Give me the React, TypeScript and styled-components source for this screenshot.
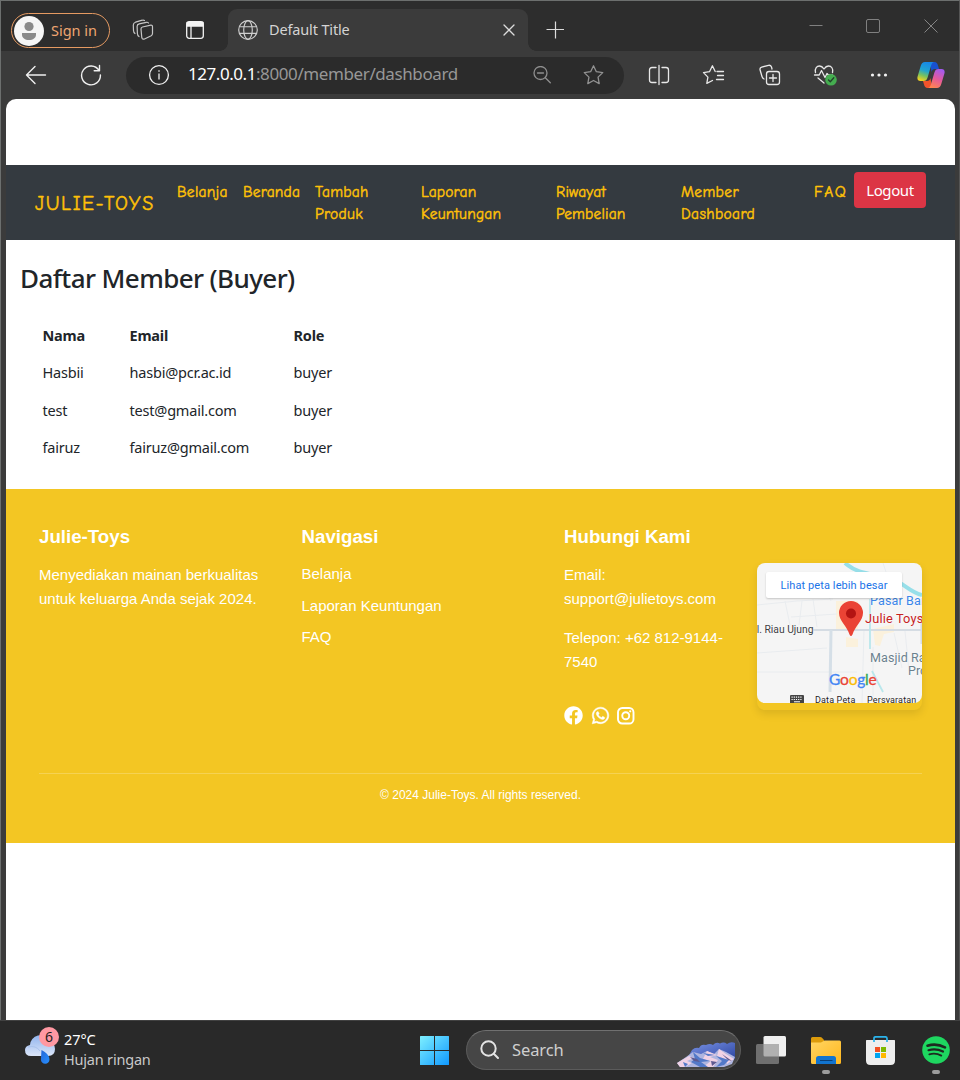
import React from 'react';
import styled, { createGlobalStyle } from 'styled-components';
import { FaFacebook, FaWhatsapp } from 'react-icons/fa';

const ui = `"Noto Sans", "Open Sans", sans-serif`;
const comic = `"Comic Neue", "Comic Sans MS", Lato, sans-serif`;
const arial = `"Liberation Sans", Arial, sans-serif`;

const Global = createGlobalStyle`
  * { box-sizing: border-box; }
  body { margin: 0; background: #3b3b3b; font-family: ${ui}; }
  h1, h2, p { margin: 0; }
  svg { display: block; flex: none; }
`;

const Screen = styled.div`
  width: 960px;
  height: 1080px;
  display: flex;
  flex-direction: column;
  overflow: hidden;
  background: #3b3b3b;
`;

const Browser = styled.div`
  height: 1020px;
  display: flex;
  flex-direction: column;
  border: 1px solid #6c6f6e;
  border-bottom: 0;
  border-right-color: #555;
`;

const Label = styled.span<{ $size: number; $ls?: number; $color?: string; $w?: number }>`
  font-size: ${(p) => p.$size}px;
  letter-spacing: ${(p) => p.$ls ?? 0}px;
  color: ${(p) => p.$color ?? '#d4d4d4'};
  font-weight: ${(p) => p.$w ?? 400};
  line-height: 20px;
  padding-bottom: 2px;
  white-space: nowrap;
`;

const TabBar = styled.div`
  height: 50px;
  flex: none;
  display: flex;
  align-items: flex-start;
  background: #2d2d2d;
`;

const SignIn = styled.div`
  width: 99px;
  height: 35px;
  margin: 12px 0 0 10px;
  display: flex;
  align-items: center;
  gap: 7px;
  padding-left: 2px;
  border: 1.5px solid #e59a62;
  border-radius: 18px;
`;

const BarIcon = styled.div<{ $left: number; $top: number }>`
  margin: ${(p) => p.$top}px 0 0 ${(p) => p.$left}px;
`;

const Tab = styled.div`
  position: relative;
  width: 300px;
  height: 42px;
  margin: 8px 0 0 24px;
  padding: 0 13px 0 10px;
  display: flex;
  align-items: center;
  background: #3b3b3b;
  border-radius: 9px 9px 0 0;
  &::before, &::after {
    content: '';
    position: absolute;
    bottom: 0;
    width: 8px;
    height: 8px;
  }
  &::before { left: -8px; background: radial-gradient(circle at 0 0, #2d2d2d 7.5px, #3b3b3b 8px); }
  &::after { right: -8px; background: radial-gradient(circle at 100% 0, #2d2d2d 7.5px, #3b3b3b 8px); }
`;

const TabTitle = styled.div`
  flex: 1;
  padding-left: 11px;
  display: flex;
`;

const Toolbar = styled.div`
  height: 48px;
  flex: none;
  display: flex;
  align-items: center;
  padding-left: 23px;
  background: #3b3b3b;
`;

const Address = styled.div`
  width: 498px;
  height: 37px;
  margin: 0 23px 0 24px;
  padding: 0 19px 0 22px;
  display: flex;
  align-items: center;
  background: #2b2b2b;
  border-radius: 19px;
`;

const Url = styled.div`
  flex: 1;
  padding-left: 18px;
  display: flex;
`;

const ToolIcons = styled.div`
  display: flex;
  align-items: center;
  gap: 31.3px;
`;

const Page = styled.main`
  flex: 1;
  margin: 0 4px 0 5px;
  padding-top: 66px;
  background: #fff;
  border-radius: 10px 10px 0 0;
`;

const Nav = styled.nav`
  height: 75px;
  display: flex;
  align-items: flex-start;
  background: #343a40;
  font-family: ${comic};
  color: #ffc107;
  -webkit-text-stroke: 0.45px #ffc107;
`;

const Brand = styled.div`
  width: 171px;
  padding: 2px 0 0 29px;
  align-self: center;
  font-size: 20px;
  line-height: 24px;
  letter-spacing: 1.6px;
`;

const NavLink = styled.a<{ $w: number; $ls: number }>`
  width: ${(p) => p.$w}px;
  padding-top: 16px;
  font-size: 15.5px;
  line-height: 22px;
  white-space: pre-line;
  letter-spacing: ${(p) => p.$ls}px;
`;

const Logout = styled.button`
  width: 72px;
  height: 36px;
  margin-top: 7px;
  padding: 0;
  border: 0;
  border-radius: 4px;
  background: #dc3545;
  color: #fff;
  font-family: ${ui};
  font-size: 15px;
  letter-spacing: -0.4px;
  -webkit-text-stroke: 0;
`;

const Members = styled.section`
  height: 249px;
  padding: 21px 0 0 14px;
  color: #212529;
`;

const Heading = styled.h1`
  font-size: 26px;
  line-height: 34px;
  font-weight: 500;
  letter-spacing: -0.6px;
`;

const Table = styled.table`
  margin: 21px 0 0 22.5px;
  border-collapse: collapse;
  table-layout: fixed;
  width: 320px;
  font-size: 14.5px;
  letter-spacing: -0.2px;
  th, td {
    height: 37.5px;
    padding: 0;
    text-align: left;
    line-height: 20px;
  }
`;

const Col = styled.col<{ $w: number }>`
  width: ${(p) => p.$w}px;
`;

const Footer = styled.footer`
  height: 354px;
  padding: 34px 33px 0;
  background: #f3c623;
  color: #fff;
  font-family: ${arial};
`;

const FooterCols = styled.div`
  height: 250px;
  display: grid;
  grid-template-columns: 262.5px 262.5px 193px 165px;
`;

const FooterTitle = styled.h2`
  padding-top: 1px;
  font-size: 18.7px;
  line-height: 25px;
  font-weight: 700;
`;

const FooterText = styled.p<{ $top: number }>`
  margin-top: ${(p) => p.$top}px;
  font-size: 15px;
  line-height: 24px;
  white-space: pre-line;
`;

const FooterLinks = styled.div`
  margin-top: 9px;
  display: flex;
  flex-direction: column;
  font-size: 15px;
  line-height: 31.5px;
`;

const FooterLink = styled.a`
  display: block;
`;

const Social = styled.div`
  display: flex;
  align-items: center;
  gap: 7.5px;
  margin-top: 32px;
`;

const MapCard = styled.div`
  width: 165px;
  height: 147px;
  margin-top: 40px;
  border-radius: 8px;
  box-shadow: 0 4px 8px rgba(0, 0, 0, 0.1);
`;

const MapView = styled.div`
  position: relative;
  height: 140px;
  overflow: hidden;
  border-radius: 8px;
  background: #f5f5f5;
  font-family: Roboto, sans-serif;
`;

const MapText = styled.span<{ $x: number; $y: number; $size: number; $c: string; $ls?: number }>`
  position: absolute;
  left: ${(p) => p.$x}px;
  top: ${(p) => p.$y}px;
  font-size: ${(p) => p.$size}px;
  line-height: 14px;
  color: ${(p) => p.$c};
  letter-spacing: ${(p) => p.$ls ?? 0}px;
  white-space: nowrap;
  text-shadow: 0 0 1px #fff, 0 0 2px #fff;
`;

const MapButton = styled.div`
  position: absolute;
  left: 9px;
  top: 9px;
  width: 136px;
  height: 26px;
  display: flex;
  align-items: center;
  justify-content: center;
  background: #fff;
  border-radius: 2px;
  box-shadow: 0 1px 2px rgba(0, 0, 0, 0.2);
  color: #1a73e8;
  font-size: 11px;
  letter-spacing: 0.1px;
`;

const MapPin = styled.svg`
  position: absolute;
  left: 82px;
  top: 38px;
`;

const MapKeyboard = styled.svg`
  position: absolute;
  left: 33px;
  top: 132px;
`;

const GoogleMark = styled.div`
  position: absolute;
  left: 72px;
  top: 107px;
  display: flex;
  font-family: Lato, sans-serif;
  font-size: 15.5px;
  line-height: 19px;
  letter-spacing: -0.25px;
  -webkit-text-stroke: 0.3px;
`;

const Tint = styled.span<{ $c: string }>`
  color: ${(p) => p.$c};
`;

const Copyright = styled.div`
  border-top: 1px solid rgba(255, 255, 255, 0.22);
  padding-top: 13px;
  text-align: center;
  font-size: 12px;
  line-height: 16px;
`;

const Taskbar = styled.div`
  height: 60px;
  display: flex;
  align-items: flex-start;
  background: #292929;
  border-top: 1px solid #414141;
`;

const Weather = styled.div`
  width: 420px;
  padding: 6px 0 0 24px;
  display: flex;
  gap: 5px;
`;

const WeatherText = styled.div`
  padding-top: 2px;
  display: flex;
  flex-direction: column;
  ${Label} {
    padding-bottom: 0;
  }
`;

const WeatherIcon = styled.div`
  position: relative;
`;

const Badge = styled.div`
  position: absolute;
  left: 15px;
  top: 0;
  width: 20px;
  height: 20px;
  border-radius: 50%;
  background: #ff98a2;
  color: #1c1c1c;
  font-size: 14px;
  line-height: 20px;
  text-align: center;
`;

const Search = styled.div`
  width: 275px;
  height: 40px;
  margin: 9px 16px 0 16px;
  padding: 0 4px 0 13px;
  display: flex;
  align-items: center;
  gap: 12px;
  overflow: hidden;
  background: #464646;
  border: 1px solid #5b5b5b;
  border-top-color: #707070;
  border-radius: 20px;
`;

const SearchLabel = styled.div`
  flex: 1;
  display: flex;
  padding-top: 2px;
`;

const TaskApp = styled.div<{ $w: number; $left: number }>`
  width: ${(p) => p.$w}px;
  margin: 15px 0 0 ${(p) => p.$left}px;
  display: flex;
  flex-direction: column;
  align-items: center;
  gap: 6px;
`;

const Running = styled.div`
  width: 8px;
  height: 4px;
  border-radius: 2px;
  background: #9c9c9c;
`;

const line = { fill: 'none', strokeLinecap: 'round', strokeLinejoin: 'round' } as const;

const navLinks = [
  { text: 'Belanja', w: 66, ls: 0.25 },
  { text: 'Beranda', w: 72, ls: 0.15 },
  { text: 'Tambah\nProduk', w: 106, ls: 0.25 },
  { text: 'Laporan\nKeuntungan', w: 135, ls: 0.15 },
  { text: 'Riwayat\nPembelian', w: 125, ls: 0.15 },
  { text: 'Member\nDashboard', w: 133, ls: 0.35 },
  { text: 'FAQ', w: 40, ls: 1.5 },
];

const members = [
  ['Hasbii', 'hasbi@pcr.ac.id', 'buyer'],
  ['test', 'test@gmail.com', 'buyer'],
  ['fairuz', 'fairuz@gmail.com', 'buyer'],
];

const Avatar = () => (
  <svg width="30" height="30" viewBox="0 0 30 30">
    <circle cx="15" cy="15" r="15" fill="#f6f6f6" />
    <circle cx="15" cy="10.5" r="4.6" fill="#8a8a8a" />
    <path d="M8 17h14v1.500c0 3.600-3 5.500-7 5.500s-7-1.900-7-5.500z" fill="#8a8a8a" />
  </svg>
);

const Workspaces = () => (
  <svg width="22" height="22" viewBox="0 0 22 22" {...line} stroke="#c6c6c6" strokeWidth="1.2">
    <path d="M10.500 8 18.800 6.200Q20.500 6 20.500 7.700V14.500Q20.500 16 19.200 16.700L12.500 20Q10.300 20.800 9.800 18.700L9 10Q8.900 8.400 10.500 8Z" />
    <path d="M16.500 4Q15.800 3 14.300 3.300L7.200 4.900Q5.100 5.400 5.100 7.400L5.400 14.500Q5.500 16.500 7 17.600" />
    <path d="M12.500 1.500Q11.500.8 10.300 1.200L3.500 3.200Q1.400 3.900 1.300 6L1.500 11.500Q1.600 13.500 3 14.500" />
  </svg>
);

const Globe = () => (
  <svg width="20" height="20" viewBox="0 0 20 20" {...line} stroke="#cfcfcf" strokeWidth="1.15">
    <circle cx="10" cy="10" r="9.300" />
    <ellipse cx="10" cy="10" rx="4.300" ry="9.300" />
    <path d="M1.600 6.700h16.800M1.600 13.300h16.800" />
  </svg>
);

const Copilot = () => (
  <svg width="28" height="26" viewBox="0 0 28 26">
    <defs>
      <linearGradient id="cpA" x1="0.600" y1="0" x2="0.300" y2="1">
        <stop offset="0" stopColor="#1687e8" /><stop offset="0.450" stopColor="#20a4d0" />
        <stop offset="0.720" stopColor="#77c160" /><stop offset="1" stopColor="#f5d21f" />
      </linearGradient>
      <linearGradient id="cpB" x1="0.700" y1="0" x2="0.300" y2="1">
        <stop offset="0" stopColor="#a35af0" /><stop offset="0.500" stopColor="#e45a9b" />
        <stop offset="1" stopColor="#ff8550" />
      </linearGradient>
    </defs>
    <path d="M13 0h4.500c2 0 2.900 1.500 3.500 3.500L22 7h-4c-2 0-3 1-3.500 3z" fill="#1851d0" />
    <path d="M15 26h-4.500c-2 0-2.900-1.500-3.500-3.500L6 19h4c2 0 3-1 3.500-3z" fill="#f0532b" />
    <path d="M8 0h9c-1.800.5-2.500 2-3.100 4.200L10.600 15.500C9.900 18 8.800 19 6.500 19H3.500C.8 19-.1 17 .6 14.500L3.700 4C4.500 1.500 5.800 0 8 0z" fill="url(#cpA)" />
    <path d="M20 26h-9c1.800-.5 2.500-2 3.100-4.200l3.300-11.300C18.100 8 19.200 7 21.500 7h3c2.700 0 3.600 2 2.900 4.500L24.300 22c-.8 2.500-2.100 4-4.300 4z" fill="url(#cpB)" />
  </svg>
);

const Instagram = () => (
  <svg width="18" height="18" viewBox="0 0 18 18" fill="none" stroke="#fff" strokeWidth="1.900">
    <rect x="1" y="1" width="15.500" height="15.500" rx="4.300" />
    <circle cx="8.750" cy="8.750" r="3.500" />
    <circle cx="13.200" cy="4.300" r="1.100" fill="#fff" stroke="none" />
  </svg>
);

const MapLines = () => (
  <svg width="165" height="140" viewBox="0 0 165 140" fill="none">
    <path d="M79 38h22v28H79zM116 66l21 -5 0 8-10 2-4 12-5-1zM89 74l12 2v8h-12z" fill="#fbf1dc" />
    <path d="M0 42 40 38 76 36M28 38l5 24M45 38l-3 24M56 36l4 28M34 54l46-3M60 10l14 28M0 109h100M0 90l70-5M107 66l-2 74M116 84v50M137 70l8 35M148 68l4 40M126 0l8 24" stroke="#e9ecef" strokeWidth="1" />
    <path d="M56 67H165" stroke="#d5dce3" strokeWidth="2" />
    <path d="M74 67l-1 62" stroke="#d5dfe7" strokeWidth="3" />
    <path d="M165 53v28" stroke="#d5dce3" strokeWidth="3" />
    <path d="M88 0c16 14 32 9 50 17 10 5 17 13 27 15" stroke="#97dfe9" strokeWidth="4" />
    <path d="M115 108l11 21M113 36v50" stroke="#b9e7ec" strokeWidth="1.800" />
  </svg>
);

const Mountains = () => (
  <svg width="60" height="26" viewBox="0 0 60 26">
    <defs>
      <linearGradient id="mtn" x1="0" y1="0" x2="1" y2="1">
        <stop offset="0" stopColor="#7c95e8" /><stop offset="1" stopColor="#27409c" />
      </linearGradient>
    </defs>
    <path d="M12 15 16 8Q19 5 23 6 25 1.500 30 3 34 1 37 3 40-.5 44 1.500 48-.5 51 2 55-1 59 1V17L50 20 20 20z" fill="url(#mtn)" />
    <path d="M1 21 10 15 17 10 25 12 31 9 38 12 43 7 50 10 59 15 56 22 48 25 4 25z" fill="#aeb5df" />
    <path d="M1 21 13 14 18 16 11 19 16 21 9 25 4 25zM31 9l10 4-7 2 8 3-5 7H27l8-6-8-2zM43 7l7 5 8 5-7 5-2-5-8-3z" fill="#f0d2e5" />
    <path d="M17 10l7 6 10 3-9 1 7 5-8 0-9-5 4-3zM40 14l6 5-6 6 8-2 5-5zM27 11l5 3 7-1zM7 20l5 2-3 3z" fill="#5379c9" />
    <path d="M14 15l7 2 3 3-6-1zM46 12l10 7-4-1zM35 19l6 1-5 4z" fill="#5d5a91" />
  </svg>
);

export default function App() {
  return (
    <Screen>
      <Global />
      <Browser>
        <TabBar>
          <SignIn>
            <Avatar />
            <Label $size={14.5} $color="#efa571">Sign in</Label>
          </SignIn>
          <BarIcon $left={22} $top={18}><Workspaces /></BarIcon>
          <BarIcon $left={32} $top={20}>
            <svg width="18" height="18" viewBox="0 0 18 18" {...line} stroke="#f3f3f3" strokeWidth="1.300">
              <rect x="0.700" y="0.700" width="16.600" height="16.600" rx="2.500" />
              <path d="M1 1.500h16v3.500H1z" fill="#f3f3f3" />
              <path d="M5 5v12" />
            </svg>
          </BarIcon>
          <Tab>
            <Globe />
            <TabTitle><Label $size={14.5} $ls={-0.15}>Default Title</Label></TabTitle>
            <svg width="12" height="12" viewBox="0 0 12 12" {...line} stroke="#dcdcdc" strokeWidth="1.300"><path d="M1 1l10 10M11 1 1 11" /></svg>
          </Tab>
          <BarIcon $left={18} $top={20}>
            <svg width="18" height="18" viewBox="0 0 18 18" stroke="#dcdcdc" strokeWidth="1.200"><path d="M9.500 .5v17M.5 8.500h18" /></svg>
          </BarIcon>
          <BarIcon $left={245} $top={18}>
            <svg width="14" height="14" viewBox="0 0 14 14" stroke="#808080"><path d="M.5 6.500h13" /></svg>
          </BarIcon>
          <BarIcon $left={43} $top={18}>
            <svg width="14" height="14" viewBox="0 0 14 14" fill="none" stroke="#808080"><rect x=".5" y=".5" width="13" height="13" rx="1.500" /></svg>
          </BarIcon>
          <BarIcon $left={44} $top={18}>
            <svg width="14" height="14" viewBox="0 0 14 14" stroke="#858585"><path d="M.5.5l13 13M13.500.5l-13 13" /></svg>
          </BarIcon>
        </TabBar>

        <Toolbar>
          <svg width="24" height="20" viewBox="0 0 24 20" {...line} stroke="#f0f0f0" strokeWidth="1.400"><path d="M11 1.500 2.500 10l8.500 8.500M2.500 10h19" /></svg>
          <svg width="54" height="22" viewBox="-32 0 54 22" {...line} stroke="#f0f0f0" strokeWidth="1.400">
            <path d="M19 6.500A9.400 9.400 0 1 0 20.400 11M19.500 1.500v5.300h-5.300" />
          </svg>
          <Address>
            <svg width="22" height="22" viewBox="0 0 22 22" fill="none" stroke="#f0f0f0" strokeWidth="1.300">
              <circle cx="11" cy="11" r="9.400" /><path d="M11 9.500v6M11 6.200v1.500" />
            </svg>
            <Url>
              <Label $size={17} $ls={-0.45} $color="#fff">127.0.0.1</Label>
              <Label $size={17} $ls={-0.4} $color="#979797">:8000/member/dashboard</Label>
            </Url>
            <svg width="19" height="19" viewBox="0 0 19 19" {...line} stroke="#8e8e8e" strokeWidth="1.300">
              <circle cx="8.500" cy="7" r="6.500" /><path d="M5.500 7h6M13.300 11.800l5 5" />
            </svg>
            <svg width="54" height="22" viewBox="-32 0 54 22" {...line} stroke="#929292" strokeWidth="1.300">
              <path d="M10.500 1.800l2.850 5.900 6.400.9-4.700 4.500 1.150 6.500L10.500 16.500l-5.700 3.100 1.150-6.500-4.700-4.500 6.400-.9z" />
            </svg>
          </Address>
          <ToolIcons>
            <svg width="24" height="22" viewBox="0 0 24 22" {...line} stroke="#e8e8e8" strokeWidth="1.300">
              <path d="M12 1.500v19M9 3.500H5Q2.500 3.500 2.500 6v10q0 2.500 2.500 2.500h4M15 3.500h4q2.500 0 2.500 2.500v10q0 2.500-2.500 2.500h-4" />
            </svg>
            <svg width="24" height="22" viewBox="0 0 24 22" {...line} stroke="#e8e8e8" strokeWidth="1.300">
              <path d="M15 7.500h6.500M15.500 11.500h6M14.500 15.500h7M13.200 7.500l-2.800-5.700-2.900 5.900-6 .9 4.400 4.500-1.100 6.300 5.700-2.900" />
            </svg>
            <svg width="24" height="22" viewBox="0 0 24 22" {...line} stroke="#e8e8e8" strokeWidth="1.300">
              <rect x="8.500" y="7.500" width="13" height="13" rx="2.500" /><path d="M15 10.500v7M11.500 14h7M6 15q-1.500-.7-2-2.500L2.100 6Q1.500 3.800 3.700 3.100L10.500 1.300Q12.700.9 13.500 3l.5 2" />
            </svg>
            <svg width="24" height="22" viewBox="0 0 24 22" {...line} stroke="#e8e8e8" strokeWidth="1.300">
              <path d="M2.500 8.500C1.500 4 4 2 6.500 2c2.300 0 3.500 1.500 4.500 3 1-1.500 2.200-3 4.500-3 2.800 0 5 2.500 4 6.500M1.500 11h4.700l2.300-4.500 3.500 7 2-4 1.300 1.500h4M5 14l6 5" />
              <circle cx="18" cy="15.800" r="5.800" fill="#45ad50" stroke="none" />
              <path d="M15.500 16l1.800 1.800 3.500-4" stroke="#22402a" />
            </svg>
            <svg width="24" height="22" viewBox="0 0 24 22" fill="#f2f2f2"><circle cx="4.500" cy="11" r="1.600" /><circle cx="11" cy="11" r="1.600" /><circle cx="17.500" cy="11" r="1.600" /></svg>
            <BarIcon $left={-6} $top={0}><Copilot /></BarIcon>
          </ToolIcons>
        </Toolbar>

        <Page>
          <Nav>
            <Brand>JULIE-TOYS</Brand>
            {navLinks.map((l) => (
              <NavLink key={l.text} $w={l.w} $ls={l.ls}>{l.text}</NavLink>
            ))}
            <Logout>Logout</Logout>
          </Nav>

          <Members>
            <Heading>Daftar Member (Buyer)</Heading>
            <Table>
              <colgroup><Col $w={87} /><Col $w={164} /><Col $w={69} /></colgroup>
              <thead><tr><th>Nama</th><th>Email</th><th>Role</th></tr></thead>
              <tbody>
                {members.map((m) => (
                  <tr key={m[0]}>{m.map((c) => <td key={c}>{c}</td>)}</tr>
                ))}
              </tbody>
            </Table>
          </Members>

          <Footer>
            <FooterCols>
              <div>
                <FooterTitle>Julie-Toys</FooterTitle>
                <FooterText $top={14}>{'Menyediakan mainan berkualitas\nuntuk keluarga Anda sejak 2024.'}</FooterText>
              </div>
              <div>
                <FooterTitle>Navigasi</FooterTitle>
                <FooterLinks>
                  <FooterLink>Belanja</FooterLink>
                  <FooterLink>Laporan Keuntungan</FooterLink>
                  <FooterLink>FAQ</FooterLink>
                </FooterLinks>
              </div>
              <div>
                <FooterTitle>Hubungi Kami</FooterTitle>
                <FooterText $top={14}>{'Email:\nsupport@julietoys.com'}</FooterText>
                <FooterText $top={15}>{'Telepon: +62 812-9144-\n7540'}</FooterText>
                <Social>
                  <FaFacebook size={19} />
                  <FaWhatsapp size={19} stroke="#fff" strokeWidth={14} />
                  <Instagram />
                </Social>
              </div>
              <MapCard>
                <MapView>
                  <MapLines />
                  <MapText $x={113} $y={31} $size={12.5} $c="#3b86e8" $ls={0.15}>Pasar Baru</MapText>
                  <MapText $x={108} $y={49} $size={12.8} $c="#c5221f" $ls={0.15}>Julie Toys</MapText>
                  <MapText $x={-6} $y={60} $size={10.3} $c="#3c4043">Jl. Riau Ujung</MapText>
                  <MapText $x={113} $y={88} $size={12.5} $c="#6b818d" $ls={0.1}>Masjid Raya</MapText>
                  <MapText $x={151} $y={101} $size={12.5} $c="#6b818d">Provinsi</MapText>
                  <MapButton>Lihat peta lebih besar</MapButton>
                  <MapPin width="24" height="36" viewBox="0 0 24 36">
                    <path d="M12 0a12 12 0 0 1 12 12c0 8-8 13-10.500 21.500q-1.500 3-3 0C8 25 0 20 0 12A12 12 0 0 1 12 0z" fill="#ea4335" />
                    <circle cx="12" cy="12.500" r="5" fill="#b31412" />
                  </MapPin>
                  <GoogleMark>
                    <Tint $c="#4285f4">G</Tint><Tint $c="#ea4335">o</Tint><Tint $c="#fbbc04">o</Tint>
                    <Tint $c="#4285f4">g</Tint><Tint $c="#34a853">l</Tint><Tint $c="#ea4335">e</Tint>
                  </GoogleMark>
                  <MapKeyboard width="14" height="9" viewBox="0 0 14 9">
                    <rect width="14" height="9" rx="1" fill="#444" />
                    <path d="M1.500 2.200h11M1.500 4.500h11" stroke="#fff" strokeWidth="1.200" strokeDasharray="1.200 1" />
                    <path d="M4 6.800h6" stroke="#fff" />
                  </MapKeyboard>
                  <MapText $x={58} $y={130} $size={9} $c="#1f1f1f" $ls={0.15}>Data Peta</MapText>
                  <MapText $x={110} $y={130} $size={9} $c="#1f1f1f" $ls={0.15}>Persyaratan</MapText>
                </MapView>
              </MapCard>
            </FooterCols>
            <Copyright>© 2024 Julie-Toys. All rights reserved.</Copyright>
          </Footer>
        </Page>
      </Browser>

      <Taskbar>
        <Weather>
          <WeatherIcon>
            <svg width="35" height="40" viewBox="0 0 35 40">
              <defs>
                <linearGradient id="cloud" x1="0" y1="0" x2="0" y2="1"><stop offset="0" stopColor="#92b5ee" /><stop offset="1" stopColor="#dbe5f8" /></linearGradient>
                <linearGradient id="drop" x1="0" y1="0" x2="1" y2="1"><stop offset="0" stopColor="#2465d6" /><stop offset="1" stopColor="#2790ff" /></linearGradient>
              </defs>
              <path d="M6 18a10 10 0 0 1 19-4q6 2 6 8 0 7-7 7H7q-6 0-6-6 0-4 5-5z" fill="url(#cloud)" />
              <path d="M4 20q8-2 12 4" fill="none" stroke="#a9c2ec" />
              <path d="M17.500 23q8 4 8 9.500a4.300 4.300 0 0 1-8.600 0z" fill="url(#drop)" />
            </svg>
            <Badge>6</Badge>
          </WeatherIcon>
          <WeatherText>
            <Label $size={14.5} $ls={-0.1} $color="#fff">27°C</Label>
            <Label $size={14.5} $ls={-0.2} $color="#c8c8c8">Hujan ringan</Label>
          </WeatherText>
        </Weather>

        <TaskApp $w={30} $left={0}>
          <svg width="30" height="30" viewBox="0 0 30 30">
            <defs><linearGradient id="win" gradientUnits="userSpaceOnUse" x1="0" y1="0" x2="30" y2="30"><stop offset="0" stopColor="#7ef0ff" /><stop offset="1" stopColor="#0c96ff" /></linearGradient></defs>
            <path d="M.5 0H14v14H0V.5zM15 0H28.500Q29 0 29 .5V14H15zM0 15h14v14H.5Q0 29 0 28.500zM15 15h14v13.500q0 .5-.5.5H15z" fill="url(#win)" />
          </svg>
        </TaskApp>
        <Search>
          <svg width="20" height="20" viewBox="0 0 20 20" {...line} stroke="#e3e3e3" strokeWidth="2">
            <circle cx="8.500" cy="8.500" r="7.200" /><path d="M13.800 13.800l4.200 4.200" />
          </svg>
          <SearchLabel><Label $size={16.5} $ls={-0.1} $color="#cfcfcf">Search</Label></SearchLabel>
          <BarIcon $left={0} $top={10}><Mountains /></BarIcon>
        </Search>
        <TaskApp $w={30} $left={-1}>
          <svg width="30" height="28" viewBox="0 0 30 28">
            <rect x="7.500" y="0" width="22.500" height="20.500" rx="1.500" fill="#efefef" />
            <rect x="0" y="8" width="23" height="20" rx="1.500" fill="#6f6f6f" />
            <path d="M7.500 8H23v12.500H9q-1.500 0-1.500-1.500z" fill="#b0b0b0" />
          </svg>
        </TaskApp>
        <TaskApp $w={30} $left={25}>
          <svg width="30" height="28" viewBox="0 0 30 28">
            <defs><linearGradient id="fld" x1="0" y1="0" x2="1" y2="1"><stop offset="0" stopColor="#ffd563" /><stop offset="1" stopColor="#ffb71d" /></linearGradient></defs>
            <path d="M0 2.500Q0 1 1.500 1H9q1.500 0 2.200 1L13 4v5H0z" fill="#dc9b0b" />
            <path d="M0 6.500h10l3.500-2H28.500q1.500 0 1.500 1.500v20.500q0 1.500-1.500 1.500H1.500Q0 28 0 26.500z" fill="url(#fld)" />
            <path d="M5 28v-5.500Q5 20 7.500 20h15q2.500 0 2.500 2.500V28z" fill="#1274cf" />
            <path d="M9 24.500h12.500" stroke="#083f78" />
          </svg>
          <Running />
        </TaskApp>
        <TaskApp $w={30} $left={25}>
          <svg width="30" height="30" viewBox="0 0 30 30">
            <path d="M0 4.500Q0 4 .5 4h28q.5 0 .5.500V24.500q0 4.500-4.500 4.500H4.500Q0 29 0 24.500z" fill="#eee" />
            <path d="M8 6V2.500Q8 .8 9.700.8h9.600Q21 .8 21 2.500V6" fill="none" stroke="#2bb3ea" strokeWidth="1.700" />
            <path d="M9 11h5v5H9z" fill="#f25022" /><path d="M15 11h5v5h-5z" fill="#7fba00" />
            <path d="M9 17h5v5H9z" fill="#00a4ef" /><path d="M15 17h5v5h-5z" fill="#ffb900" />
          </svg>
        </TaskApp>
        <TaskApp $w={28} $left={26}>
          <svg width="28" height="28" viewBox="0 0 28 28" fill="none" stroke="#1d2a20" strokeLinecap="round">
            <circle cx="14" cy="14" r="13.800" fill="#1ed760" stroke="none" />
            <path d="M5.500 9.700q9-2.800 17.500 1.700" strokeWidth="2.600" />
            <path d="M6.500 14.200q7.500-2.200 14.500 1.400" strokeWidth="2.200" />
            <path d="M7.300 18.300q6.500-1.800 12 1.300" strokeWidth="1.800" />
          </svg>
          <Running />
        </TaskApp>
      </Taskbar>
    </Screen>
  );
}
